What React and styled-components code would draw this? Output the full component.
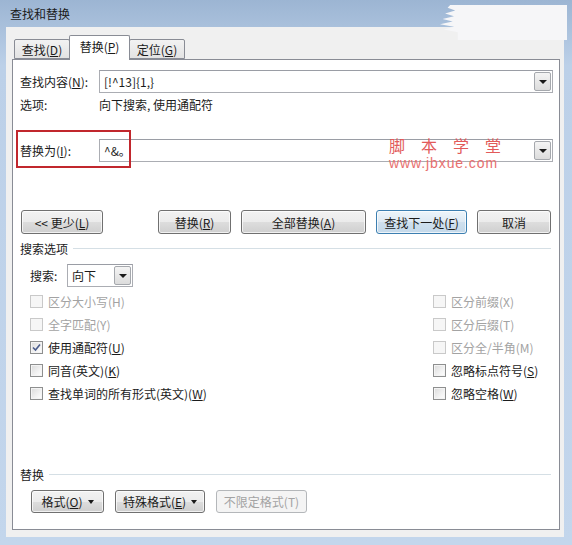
import React from "react";
import styled, { createGlobalStyle } from "styled-components";

const Global = createGlobalStyle`
  html, body { margin: 0; padding: 0; }
  body {
    font-family: "Noto Sans CJK SC", "Noto Sans", sans-serif;
    font-size: 12px;
    color: #1b1b1b;
  }
`;

const Window = styled.div`
  position: relative;
  width: 572px;
  height: 545px;
  display: flex;
  flex-direction: column;
  background: linear-gradient(180deg, #9cb5d3 0%, #bcd0e8 12%, #c3d6ec 100%);
  overflow: hidden;
`;

const TitleBar = styled.div`
  height: 27px;
  display: flex;
  align-items: center;
  padding-left: 10px;
  font-size: 12px;
  color: #1a1a1a;
`;

const Blot = styled.div`
  position: absolute;
  left: 440px;
  top: 5px;
  width: 127px;
  height: 35px;
  background: #f6f6f8;
  clip-path: polygon(
    8% 0, 100% 0, 100% 100%, 14% 100%, 14% 78%, 3% 70%, 11% 62%, 0 55%,
    10% 47%, 2% 40%, 11% 32%, 4% 24%, 12% 16%, 6% 8%
  );
`;

const Panel = styled.div`
  flex: 1;
  margin: 0 8px 8px 6px;
  background: #f0f0f0;
  padding: 8px 4px 7px 6px;
  display: flex;
  flex-direction: column;
`;

const TabRow = styled.div`
  height: 24px;
  display: flex;
  align-items: flex-end;
  padding-left: 2px;
  position: relative;
  z-index: 1;
`;

const Tab = styled.div`
  width: ${(p) => p.$w}px;
  height: ${(p) => (p.$active ? 25 : 20)}px;
  box-sizing: border-box;
  display: flex;
  align-items: center;
  justify-content: center;
  border: 1px solid #898c95;
  border-bottom: ${(p) => (p.$active ? "none" : "1px solid #898c95")};
  margin-bottom: ${(p) => (p.$active ? -1 : 0)}px;
  margin-left: ${(p) => (p.$first ? 0 : -1)}px;
  background: ${(p) =>
    p.$active ? "#ffffff" : "linear-gradient(180deg, #f2f2f2 0%, #e3e3e3 100%)"};
  padding-bottom: ${(p) => (p.$active ? 3 : 0)}px;
  border-radius: 2px 2px 0 0;
  font-size: 12px;
`;

const Content = styled.div`
  flex: 1;
  background: #fff;
  border: 1px solid #898c95;
  padding: 10px 6px 16px 7px;
  display: flex;
  flex-direction: column;
`;

const FieldRow = styled.div`
  position: relative;
  display: flex;
  align-items: center;
  height: 23px;
  margin-top: ${(p) => p.$mt || 0}px;
`;

const Label = styled.div`
  width: 79px;
  white-space: nowrap;
`;

const Combo = styled.div`
  flex: 1;
  height: 23px;
  box-sizing: border-box;
  border: 1px solid #abadb3;
  border-top-color: #9a9da5;
  display: flex;
  align-items: center;
  padding-left: 4px;
  background: #fff;
`;

const ComboText = styled.div`
  flex: 1;
  font-size: 12px;
`;

const DropBtn = styled.div`
  width: 17px;
  height: 19px;
  margin-right: 1px;
  box-sizing: border-box;
  border: 1px solid #a5a8ad;
  border-radius: 2px;
  background: linear-gradient(180deg, #f4f4f4 0%, #dcdcdc 100%);
  display: flex;
  align-items: center;
  justify-content: center;
`;

const Arrow = styled.span`
  width: 0;
  height: 0;
  border-left: 4px solid transparent;
  border-right: 4px solid transparent;
  border-top: 4px solid #1a1a1a;
`;

const InfoRow = styled.div`
  display: flex;
  align-items: center;
  height: 16px;
  margin-top: 3px;
`;

const RedBox = styled.div`
  position: absolute;
  left: -4px;
  top: -9px;
  width: 115px;
  height: 38px;
  box-sizing: border-box;
  border: 2px solid #c1272d;
  pointer-events: none;
`;

const Watermark = styled.div`
  position: absolute;
  left: 369px;
  top: -2px;
  width: 112px;
  color: #e25a5a;
  pointer-events: none;
`;

const WmTitle = styled.div`
  font-family: "Noto Sans CJK SC", sans-serif;
  font-size: 16px;
  line-height: 16px;
  height: 16px;
  display: flex;
  justify-content: space-between;
`;

const WmUrl = styled.div`
  font-family: "Liberation Sans", Arial, sans-serif;
  font-size: 14px;
  line-height: 14px;
  letter-spacing: 0.9px;
  color: #e87070;
  margin-top: 3px;
`;

const ButtonRow = styled.div`
  display: flex;
  align-items: center;
  margin-top: 48px;
  padding-left: 1px;
  padding-right: 2px;
`;

const ButtonGroup = styled.div`
  display: flex;
  gap: 10px;
  margin-left: auto;
`;

const Button = styled.div`
  width: ${(p) => p.$w}px;
  height: ${(p) => p.$h || 24}px;
  box-sizing: border-box;
  border: 1px solid ${(p) => (p.$focus ? "#3c7fb1" : p.$disabled ? "#b4b7ba" : "#707070")};
  border-radius: 3px;
  background: ${(p) =>
    p.$focus
      ? "linear-gradient(180deg, #edf5fb 0%, #dde9f3 50%, #cfe0ee 51%, #c4d9ea 100%)"
      : p.$disabled
      ? "#f4f4f4"
      : "linear-gradient(180deg, #f2f2f2 0%, #ebebeb 50%, #dddddd 51%, #cfcfcf 100%)"};
  box-shadow: inset 0 0 0 1px ${(p) => (p.$disabled ? "#f4f4f4" : "rgba(255,255,255,0.7)")};
  color: ${(p) => (p.$disabled ? "#a3a3a3" : "#1b1b1b")};
  display: flex;
  align-items: center;
  justify-content: center;
  gap: 5px;
  font-size: 12px;
  white-space: nowrap;
`;

const SectionRow = styled.div`
  display: flex;
  align-items: center;
  height: 16px;
  margin-top: ${(p) => p.$mt || 0}px;
`;

const Rule = styled.div`
  flex: 1;
  height: 0;
  border-top: 1px solid #d5dfe5;
  margin-left: 5px;
  margin-right: 2px;
`;

const SearchRow = styled.div`
  display: flex;
  align-items: center;
  margin-top: 8px;
  padding-left: 10px;
  height: 23px;
`;

const SearchLabel = styled.div`
  width: 37px;
`;

const Select = styled(Combo)`
  flex: none;
  width: 66px;
`;

const Checks = styled.div`
  display: grid;
  grid-template-columns: 403px 1fr;
  margin-top: 3px;
  padding-left: 10px;
`;

const CheckCol = styled.div`
  display: flex;
  flex-direction: column;
`;

const CheckRow = styled.div`
  display: flex;
  align-items: center;
  height: 23px;
  gap: 5px;
  color: ${(p) => (p.$disabled ? "#a3a3a3" : "#1b1b1b")};
  white-space: nowrap;
`;

const Box = styled.div`
  width: 13px;
  height: 13px;
  box-sizing: border-box;
  border: 1px solid ${(p) => (p.$disabled ? "#c9c9c9" : "#8e8f8f")};
  background: ${(p) =>
    p.$disabled ? "#f6f6f6" : "linear-gradient(135deg, #dadada 0%, #f2f2f2 60%, #ffffff 100%)"};
  box-shadow: inset 0 0 0 1px ${(p) => (p.$disabled ? "#f6f6f6" : "#f4f4f4")};
  display: flex;
  align-items: center;
  justify-content: center;
`;

const Bottom = styled.div`
  margin-top: auto;
`;

const BottomButtons = styled.div`
  display: flex;
  margin-top: 8px;
  padding-left: 11px;
  gap: 11px;
`;

const SmallArrow = styled(Arrow)`
  border-left-width: 3.5px;
  border-right-width: 3.5px;
  border-top-width: 4px;
  margin-top: 1px;
`;

function Btn({ children, arrow, ...rest }) {
  return (
    <Button {...rest}>
      <span>{children}</span>
      {arrow && <SmallArrow />}
    </Button>
  );
}

function Check({ label, checked, disabled }) {
  return (
    <CheckRow $disabled={disabled}>
      <Box $disabled={disabled}>
        {checked && (
          <svg width="9" height="9" viewBox="0 0 9 9">
            <path d="M1 4.5 L3.5 7 L8 1.5" fill="none" stroke="#4a5c8c" strokeWidth="1.6" />
          </svg>
        )}
      </Box>
      <span>{label}</span>
    </CheckRow>
  );
}

export default function App() {
  return (
    <>
      <Global />
      <Window>
        <TitleBar>查找和替换</TitleBar>
        <Blot />
        <Panel>
          <TabRow>
            <Tab $w={56} $first>
              <span>
                查找(<u>D</u>)
              </span>
            </Tab>
            <Tab $w={61} $active>
              <span>
                替换(<u>P</u>)
              </span>
            </Tab>
            <Tab $w={56}>
              <span>
                定位(<u>G</u>)
              </span>
            </Tab>
          </TabRow>
          <Content>
            <FieldRow>
              <Label>
                查找内容(<u>N</u>):
              </Label>
              <Combo>
                <ComboText>[!^13]{"{1,}"}</ComboText>
                <DropBtn>
                  <Arrow />
                </DropBtn>
              </Combo>
            </FieldRow>
            <InfoRow>
              <Label>选项:</Label>
              <span>向下搜索, 使用通配符</span>
            </InfoRow>
            <FieldRow $mt={27}>
              <Label>
                替换为(<u>I</u>):
              </Label>
              <Combo>
                <ComboText>^&amp;。</ComboText>
                <DropBtn>
                  <Arrow />
                </DropBtn>
              </Combo>
              <RedBox />
              <Watermark>
                <WmTitle>
                  <span>脚</span>
                  <span>本</span>
                  <span>学</span>
                  <span>堂</span>
                </WmTitle>
                <WmUrl>www.jbxue.com</WmUrl>
              </Watermark>
            </FieldRow>
            <ButtonRow>
              <Btn $w={82}>
                &lt;&lt; 更少(<u>L</u>)
              </Btn>
              <ButtonGroup>
                <Btn $w={73}>
                  替换(<u>R</u>)
                </Btn>
                <Btn $w={125}>
                  全部替换(<u>A</u>)
                </Btn>
                <Btn $w={91} $focus>
                  查找下一处(<u>F</u>)
                </Btn>
                <Btn $w={74}>取消</Btn>
              </ButtonGroup>
            </ButtonRow>
            <SectionRow $mt={6}>
              <span>搜索选项</span>
              <Rule />
            </SectionRow>
            <SearchRow>
              <SearchLabel>搜索:</SearchLabel>
              <Select>
                <ComboText>向下</ComboText>
                <DropBtn>
                  <Arrow />
                </DropBtn>
              </Select>
            </SearchRow>
            <Checks>
              <CheckCol>
                <Check label="区分大小写(H)" disabled />
                <Check label="全字匹配(Y)" disabled />
                <Check
                  checked
                  label={
                    <>
                      使用通配符(<u>U</u>)
                    </>
                  }
                />
                <Check
                  label={
                    <>
                      同音(英文)(<u>K</u>)
                    </>
                  }
                />
                <Check
                  label={
                    <>
                      查找单词的所有形式(英文)(<u>W</u>)
                    </>
                  }
                />
              </CheckCol>
              <CheckCol>
                <Check label="区分前缀(X)" disabled />
                <Check label="区分后缀(T)" disabled />
                <Check label="区分全/半角(M)" disabled />
                <Check
                  label={
                    <>
                      忽略标点符号(<u>S</u>)
                    </>
                  }
                />
                <Check
                  label={
                    <>
                      忽略空格(<u>W</u>)
                    </>
                  }
                />
              </CheckCol>
            </Checks>
            <Bottom>
              <SectionRow>
                <span>替换</span>
                <Rule />
              </SectionRow>
              <BottomButtons>
                <Btn $w={73} $h={23} arrow>
                  格式(<u>O</u>)
                </Btn>
                <Btn $w={90} $h={23} arrow>
                  特殊格式(<u>E</u>)
                </Btn>
                <Btn $w={91} $h={23} $disabled>
                  不限定格式(T)
                </Btn>
              </BottomButtons>
            </Bottom>
          </Content>
        </Panel>
      </Window>
    </>
  );
}
